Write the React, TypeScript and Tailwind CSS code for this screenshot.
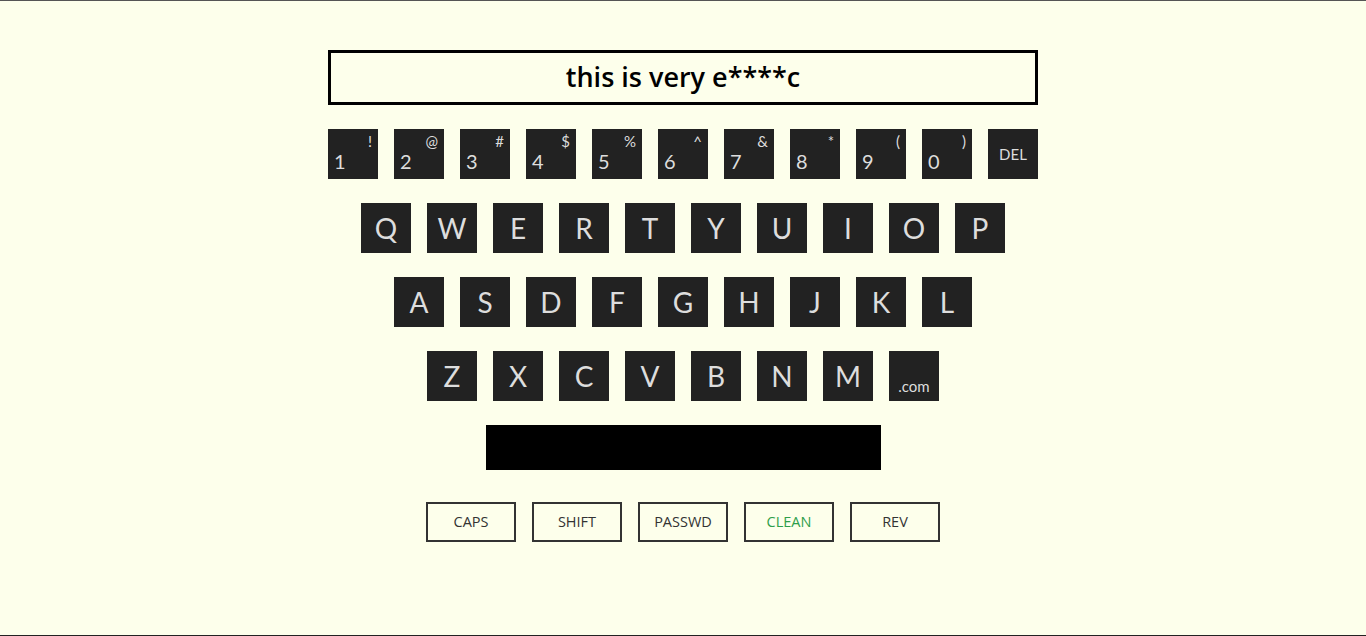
import React from "react";

const nums: [string, string][] = [
  ["1", "!"], ["2", "@"], ["3", "#"], ["4", "$"], ["5", "%"],
  ["6", "^"], ["7", "&"], ["8", "*"], ["9", "("], ["0", ")"],
];
const rows = [
  ["Q", "W", "E", "R", "T", "Y", "U", "I", "O", "P"],
  ["A", "S", "D", "F", "G", "H", "J", "K", "L"],
  ["Z", "X", "C", "V", "B", "N", "M"],
];
const btns = ["CAPS", "SHIFT", "PASSWD", "CLEAN", "REV"];

export default function App() {
  return (
    <div className="h-[636px] w-full overflow-hidden bg-[#fdffeb] border-t border-t-[#555] border-b border-b-[#222] flex flex-col items-center pt-[49px]">
      <div
        className="w-[710px] h-[55px] border-[3px] border-black flex items-center justify-center text-[27px] font-semibold text-black"
        style={{ fontFamily: '"Open Sans", "Noto Sans", sans-serif' }}
      >
        this is very e****c
      </div>
      <div className="mt-[24px] flex gap-[16px]" style={{ fontFamily: 'Lato, "Noto Sans", sans-serif' }}>
        {nums.map(([n, s]) => (
          <div key={n} className="relative w-[50px] h-[50px] bg-[#222] text-[#ddd]">
            <span className="absolute right-[6px] top-[1px] text-[15px]">{s}</span>
            <span className="absolute left-[6px] bottom-[3px] text-[20px]">{n}</span>
          </div>
        ))}
        <div className="w-[50px] h-[50px] bg-[#222] text-[#ddd] flex items-center justify-center text-[15px]">DEL</div>
      </div>
      {rows.map((r, i) => (
        <div key={i} className="mt-[24px] flex gap-[16px]" style={{ fontFamily: 'Lato, "Noto Sans", sans-serif' }}>
          {r.map((k) => (
            <div key={k} className="w-[50px] h-[50px] bg-[#222] text-[#ddd] flex items-center justify-center text-[28px]">
              {k}
            </div>
          ))}
          {i === 2 && (
            <div className="w-[50px] h-[50px] bg-[#222] text-[#ddd] flex items-end justify-center pb-[4px] text-[15px]">
              .com
            </div>
          )}
        </div>
      ))}
      <div className="mt-[24px] w-[395px] h-[45px] bg-black" />
      <div className="mt-[32px] flex gap-[16px]" style={{ fontFamily: '"Open Sans", "Noto Sans", sans-serif' }}>
        {btns.map((b) => (
          <div
            key={b}
            className={`w-[90px] h-[40px] border-2 border-[#333] flex items-center justify-center text-[14.5px] font-medium ${b === "CLEAN" ? "text-[#2e9e4a]" : "text-[#333]"}`}
          >
            {b}
          </div>
        ))}
      </div>
    </div>
  );
}
